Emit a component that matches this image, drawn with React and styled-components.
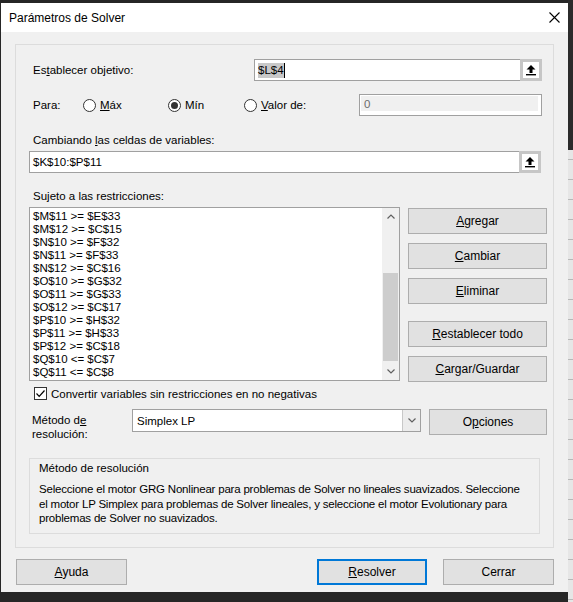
import styled, { createGlobalStyle } from "styled-components";

const GlobalStyle = createGlobalStyle`
  html, body {
    margin: 0;
    padding: 0;
    background: #262626;
  }
  body {
    font-family: "Liberation Sans", Arial, sans-serif;
    font-size: 11.5px;
    color: #000;
  }
`;

const constraints = [
  "$M$11 >= $E$33",
  "$M$12 >= $C$15",
  "$N$10 >= $F$32",
  "$N$11 >= $F$33",
  "$N$12 >= $C$16",
  "$O$10 >= $G$32",
  "$O$11 >= $G$33",
  "$O$12 >= $C$17",
  "$P$10 >= $H$32",
  "$P$11 >= $H$33",
  "$P$12 >= $C$18",
  "$Q$10 <= $C$7",
  "$Q$11 <= $C$8",
];

function RefIcon() {
  return (
    <svg width="12" height="12" viewBox="0 0 12 12">
      <path d="M6 1 L10.5 5.5 L7.5 5.5 L7.5 9 L4.5 9 L4.5 5.5 L1.5 5.5 Z" fill="#000" />
      <rect x="1" y="10" width="10" height="1.4" fill="#000" />
    </svg>
  );
}

function Chevron({ up }) {
  return (
    <svg width="8" height="5" viewBox="0 0 8 5">
      <polyline
        points={up ? "0.5,4.5 4,1 7.5,4.5" : "0.5,0.5 4,4 7.5,0.5"}
        fill="none"
        stroke="#606060"
        strokeWidth="1.2"
      />
    </svg>
  );
}

export default function App() {
  return (
    <Screen>
      <GlobalStyle />
      <Dialog>
        <TitleBar>
          <span>Parámetros de Solver</span>
          <Close>
            <svg width="11" height="11" viewBox="0 0 11 11">
              <path d="M0.5 0.5 L10.5 10.5 M10.5 0.5 L0.5 10.5" stroke="#000" strokeWidth="1.1" />
            </svg>
          </Close>
        </TitleBar>

        <Body>
          <Group>
            <Row $mt={14}>
              <Label>Es<u>t</u>ablecer objetivo:</Label>
              <Field $w={288}>
                <Selected>$L$4</Selected>
                <Caret />
                <RefButton><RefInner><RefIcon /></RefInner></RefButton>
              </Field>
            </Row>

            <Row $mt={13}>
              <Label $w={50}>Para:</Label>
              <Radio $w={85}><Circle /><span><u>M</u>áx</span></Radio>
              <Radio $w={76}><Circle $on /><span>Mín</span></Radio>
              <Radio><Circle /><span><u>V</u>alor de:</span></Radio>
              <DisabledField $w={183}>
                <DisabledInner>0</DisabledInner>
              </DisabledField>
            </Row>

            <Caption $mt={16}>Cambiando <u>l</u>as celdas de variables:</Caption>
            <Row $mt={3}>
              <Field $w={512} $plain>
                <FieldText>$K$10:$P$11</FieldText>
                <RefButton><RefInner><RefIcon /></RefInner></RefButton>
              </Field>
            </Row>

            <Caption $mt={15}>Su<u>j</u>eto a las restricciones:</Caption>
            <ListRow>
              <ListBox>
                <ListItems>
                  {constraints.map((c) => (
                    <Item key={c}>{c}</Item>
                  ))}
                </ListItems>
                <ScrollBar>
                  <ScrollArrow><Chevron up /></ScrollArrow>
                  <Track>
                    <Thumb $top={48} $h={88} />
                  </Track>
                  <ScrollArrow><Chevron /></ScrollArrow>
                </ScrollBar>
              </ListBox>
              <ButtonColumn>
                <Button $w={139}><u>A</u>gregar</Button>
                <Button $w={139}><u>C</u>ambiar</Button>
                <Button $w={139}><u>E</u>liminar</Button>
                <Button $w={139} $mt={8}><u>R</u>establecer todo</Button>
                <Button $w={139}><u>C</u>argar/Guardar</Button>
              </ButtonColumn>
            </ListRow>

            <CheckRow>
              <CheckBox>
                <svg width="11" height="11" viewBox="0 0 11 11">
                  <polyline points="1.5,5.5 4.2,8.3 9.5,2.5" fill="none" stroke="#000" strokeWidth="1.2" />
                </svg>
              </CheckBox>
              <span>Convertir variables sin restricciones en no negativas</span>
            </CheckRow>

            <MethodRow>
              <MethodLabel>Método d<u>e</u><br />resolución:</MethodLabel>
              <Select>
                <SelectText>Simplex LP</SelectText>
                <DropButton><Chevron /></DropButton>
              </Select>
              <Button $w={118}>O<u>p</u>ciones</Button>
            </MethodRow>

            <Description>
              <DescTitle>Método de resolución</DescTitle>
              <DescText>
                Seleccione el motor GRG Nonlinear para problemas de Solver no lineales suavizados. Seleccione
                <br />
                el motor LP Simplex para problemas de Solver lineales, y seleccione el motor Evolutionary para
                <br />
                problemas de Solver no suavizados.
              </DescText>
            </Description>
          </Group>

          <Footer>
            <Button $w={111}><u>A</u>yuda</Button>
            <Button $w={110} $default $ml="auto"><u>R</u>esolver</Button>
            <Button $w={111} $ml="16px">Cerrar</Button>
          </Footer>
        </Body>
      </Dialog>
      <SheetEdge />
    </Screen>
  );
}

const Screen = styled.div`
  display: flex;
  width: 573px;
  height: 602px;
  padding-top: 3px;
  box-sizing: border-box;
  background: #262626;
  overflow: hidden;
`;

const Dialog = styled.div`
  width: 567px;
  height: 589px;
  margin-left: 1px;
  background: #f0f0f0;
  display: flex;
  flex-direction: column;
  flex-shrink: 0;
`;

const SheetEdge = styled.div`
  flex: 1;
  margin-top: -3px;
  height: 602px;
  background:
    linear-gradient(#2b2b2b 0 150px, transparent 150px),
    repeating-linear-gradient(#e6e6e6 0 19px, #b8b8b8 19px 20px);
`;

const TitleBar = styled.div`
  height: 29px;
  background: #fff;
  display: flex;
  align-items: center;
  padding-left: 8px;
  font-size: 12px;
`;

const Close = styled.div`
  margin-left: auto;
  width: 28px;
  height: 29px;
  display: flex;
  align-items: center;
  justify-content: center;
`;

const Body = styled.div`
  padding: 12px 14px 0;
  display: flex;
  flex-direction: column;
`;

const Group = styled.div`
  height: 504px;
  box-sizing: border-box;
  border: 1px solid #dcdcdc;
  padding: 0 5px 0 13px;
  display: flex;
  flex-direction: column;
`;

const Row = styled.div`
  display: flex;
  align-items: center;
  height: 22px;
  margin-top: ${(p) => p.$mt || 0}px;
`;

const Label = styled.span`
  padding-left: 4px;
  width: ${(p) => (p.$w ? `${p.$w}px` : "auto")};
  flex-shrink: 0;
`;

const Caption = styled.div`
  padding-left: 4px;
  line-height: 16px;
  margin-top: ${(p) => p.$mt || 0}px;
`;

const Field = styled.div`
  display: flex;
  align-items: center;
  box-sizing: border-box;
  height: 22px;
  width: ${(p) => p.$w}px;
  margin-left: ${(p) => (p.$plain ? "0" : "auto")};
  margin-right: 6px;
  border: 1px solid #a0a0a0;
  background: #fff;
`;

const Selected = styled.span`
  margin-left: 3px;
  background: #c8c8c8;
  line-height: 15px;
`;

const Caret = styled.span`
  width: 1px;
  height: 15px;
  background: #000;
`;

const FieldText = styled.span`
  padding-left: 3px;
`;

const RefButton = styled.div`
  margin: -1px -1px -1px auto;
  width: 22px;
  height: 22px;
  box-sizing: border-box;
  padding: 3px;
  background: #c6c6c6;
  display: flex;
`;

const RefInner = styled.div`
  flex: 1;
  background: #fff;
  display: flex;
  align-items: center;
  justify-content: center;
`;

const Radio = styled.div`
  display: flex;
  align-items: center;
  gap: 4px;
  width: ${(p) => (p.$w ? `${p.$w}px` : "auto")};
  flex-shrink: 0;
`;

const Circle = styled.span`
  width: 13px;
  height: 13px;
  box-sizing: border-box;
  border-radius: 50%;
  border: 1px solid #333;
  background: #fff;
  display: flex;
  align-items: center;
  justify-content: center;
  &::after {
    content: "";
    width: 7px;
    height: 7px;
    border-radius: 50%;
    background: #333;
    display: ${(p) => (p.$on ? "block" : "none")};
  }
`;

const DisabledField = styled.div`
  margin-left: auto;
  margin-right: 6px;
  width: ${(p) => p.$w}px;
  height: 22px;
  box-sizing: border-box;
  border: 1px solid #a0a0a0;
  background: #fff;
  padding: 1px 3px 4px 1px;
  display: flex;
`;

const DisabledInner = styled.div`
  flex: 1;
  background: #f0f0f0;
  color: #6d6d6d;
  padding-left: 3px;
  line-height: 16px;
`;

const ListRow = styled.div`
  display: flex;
  margin-top: 3px;
`;

const ListBox = styled.div`
  width: 371px;
  height: 174px;
  box-sizing: border-box;
  border: 1px solid #a0a0a0;
  background: #fff;
  display: flex;
`;

const ListItems = styled.div`
  flex: 1;
  padding: 2px 0 0 3px;
`;

const Item = styled.div`
  line-height: 13px;
  white-space: nowrap;
`;

const ScrollBar = styled.div`
  width: 17px;
  background: #f0f0f0;
  display: flex;
  flex-direction: column;
`;

const ScrollArrow = styled.div`
  height: 17px;
  display: flex;
  align-items: center;
  justify-content: center;
`;

const Track = styled.div`
  flex: 1;
  padding: 0 1px;
`;

const Thumb = styled.div`
  margin-top: ${(p) => p.$top}px;
  height: ${(p) => p.$h}px;
  background: #cdcdcd;
`;

const ButtonColumn = styled.div`
  display: flex;
  flex-direction: column;
  gap: 9px;
  margin: 1px 0 0 8px;
`;

const Button = styled.button`
  width: ${(p) => p.$w}px;
  height: 26px;
  flex-shrink: 0;
  box-sizing: border-box;
  margin-top: ${(p) => p.$mt || 0}px;
  margin-left: ${(p) => p.$ml || 0};
  padding: 0;
  border: ${(p) => (p.$default ? "2px solid #0078d7" : "1px solid #adadad")};
  background: #e1e1e1;
  font-family: inherit;
  font-size: 12px;
  color: #000;
`;

const CheckRow = styled.div`
  display: flex;
  align-items: center;
  gap: 4px;
  margin-top: 5px;
  padding-left: 5px;
  height: 13px;
`;

const CheckBox = styled.span`
  width: 13px;
  height: 13px;
  box-sizing: border-box;
  border: 1px solid #333;
  background: #fff;
  display: flex;
  align-items: center;
  justify-content: center;
`;

const MethodRow = styled.div`
  display: flex;
  align-items: flex-start;
  margin-top: 9px;
`;

const MethodLabel = styled.div`
  width: 103px;
  padding: 4px 0 0 3px;
  box-sizing: border-box;
  line-height: 14px;
`;

const Select = styled.div`
  width: 289px;
  height: 23px;
  box-sizing: border-box;
  border: 1px solid #a0a0a0;
  background: #fff;
  display: flex;
  align-items: center;
  margin-right: 8px;
`;

const SelectText = styled.span`
  padding-left: 4px;
  flex: 1;
`;

const DropButton = styled.div`
  width: 17px;
  height: 100%;
  border-left: 1px solid #c8c8c8;
  background: #ececec;
  display: flex;
  align-items: center;
  justify-content: center;
`;

const Description = styled.div`
  margin: auto 8px 13px 0;
  height: 76px;
  box-sizing: border-box;
  border: 1px solid #dcdcdc;
  padding: 2px 0 0 9px;
`;

const DescTitle = styled.div`
  line-height: 15px;
`;

const DescText = styled.div`
  margin-top: 6px;
  line-height: 14.5px;
  letter-spacing: -0.2px;
  white-space: nowrap;
`;

const Footer = styled.div`
  display: flex;
  padding: 11px 0 0 1px;
`;
